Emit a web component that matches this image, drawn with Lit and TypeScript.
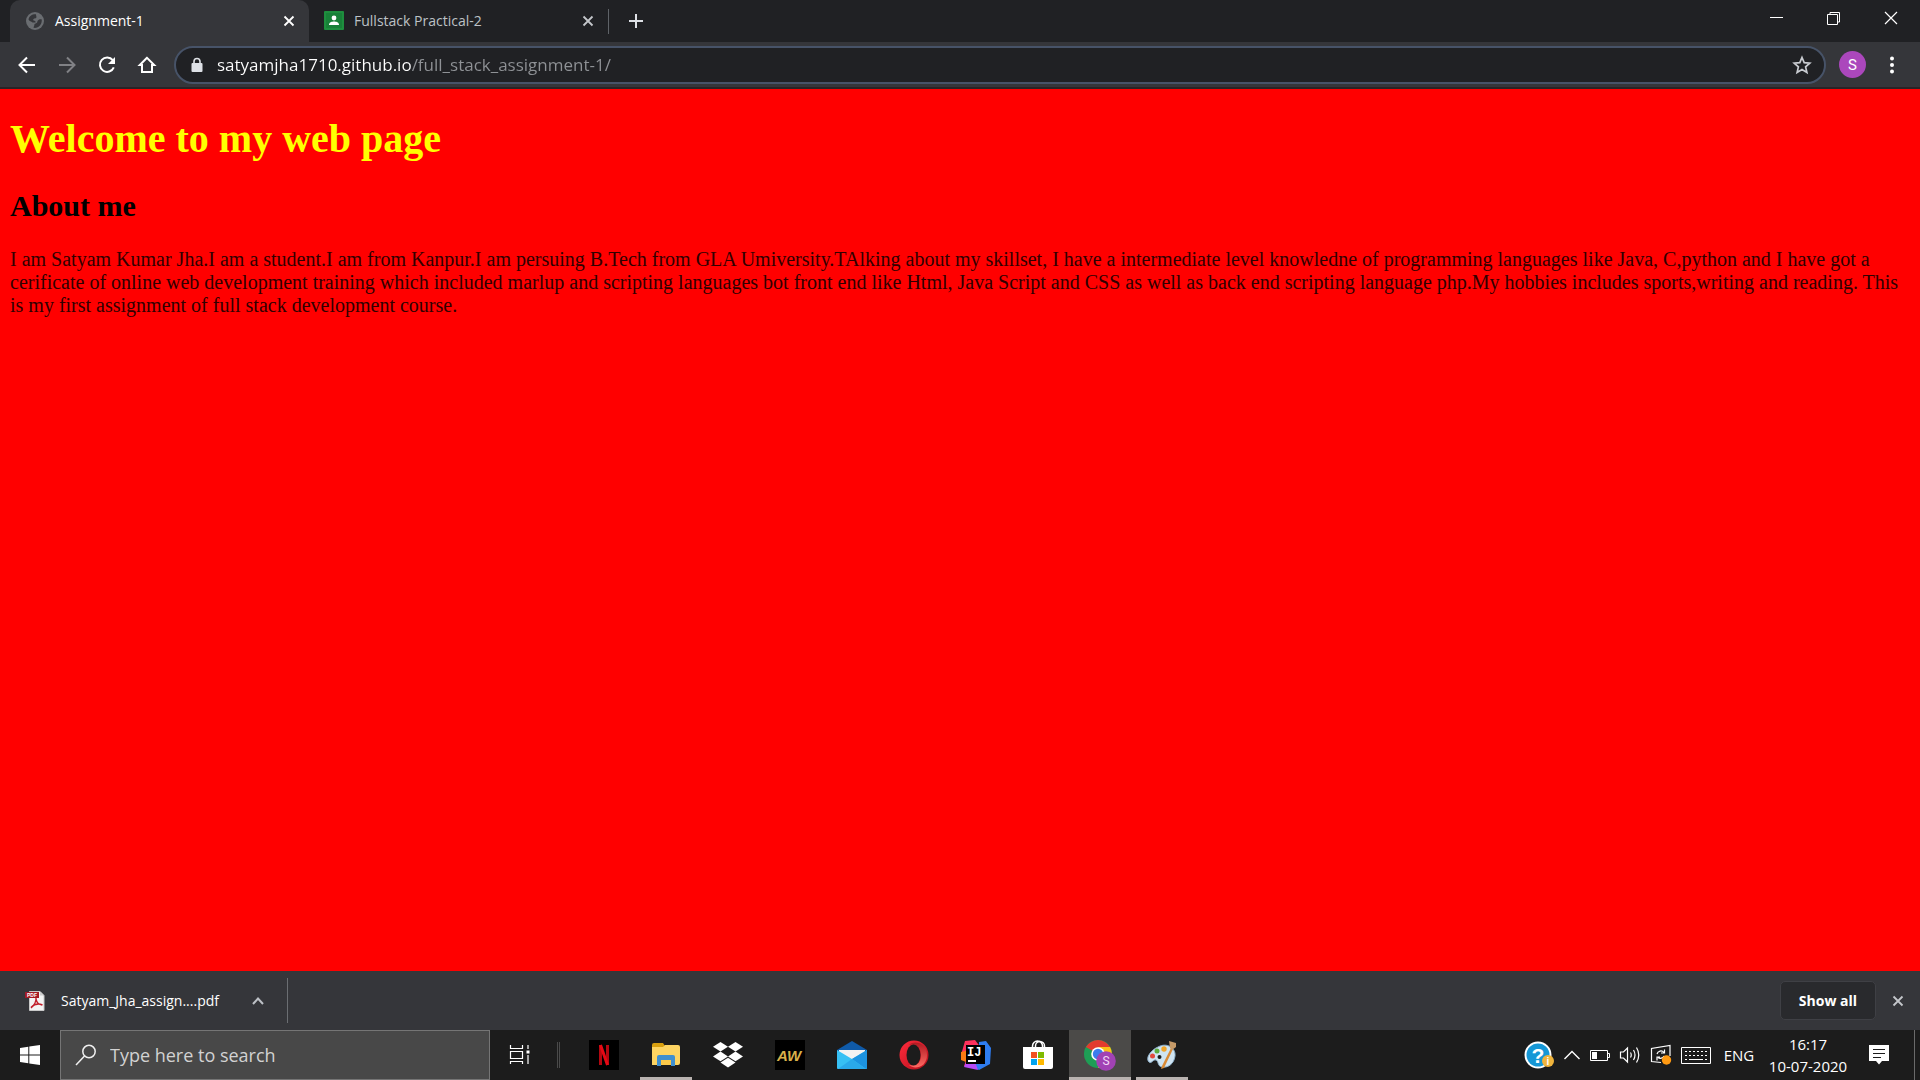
import { LitElement, html, svg, css, nothing, type TemplateResult } from "lit";
import { customElement, property } from "lit/decorators.js";
import { classMap } from "lit/directives/class-map.js";

const UI_FONT = css`"Open Sans", "Noto Sans", sans-serif`;

const resetStyles = css`
  :host,
  * {
    box-sizing: border-box;
  }
  button {
    display: flex;
    align-items: center;
    justify-content: center;
    flex: none;
    margin: 0;
    padding: 0;
    border: 0;
    background: none;
    color: inherit;
    font: inherit;
    white-space: nowrap;
  }
  svg {
    display: block;
    flex: none;
  }
`;

const icon = (size: number, body: TemplateResult) =>
  html`<svg width=${size} height=${size} viewBox="0 0 ${size} ${size}" fill="none" aria-hidden="true">${body}</svg>`;

/* ---------- browser icons ---------- */

const globeIcon = icon(18, svg`
  <circle cx="9" cy="9" r="9" fill="#6a6d71"/>
  <path d="M10 2.200C6 2 3 4 2.500 7.500 3 9.500 5.500 9 6.500 10.500H9.500C10 9.500 9 8.500 7.500 8.500 6.500 7 8 6 10 6.200 11 5 10 4 10 2.200Z M15.800 7.500C14 7 12.500 7.500 11.500 9 11.500 11 10 11.500 8.500 12 8.500 14 7.500 14.500 7.500 15.800 12.500 16.500 16 13 15.800 7.500Z" fill="#35363a"/>`);

const classroomIcon = icon(20, svg`
  <rect width="20" height="19" rx="1" fill="#1e8e3e"/>
  <rect x="2" y="2" width="16" height="15" fill="#188038"/>
  <circle cx="10" cy="7" r="2.400" fill="#fff"/>
  <path d="M5 14C5 11 8 10.500 10 10.500S15 11 15 14Z" fill="#fff"/>`);

const crossIcon = (color: string) => icon(12, svg`
  <path d="M1.500 1.500L10.500 10.500M10.500 1.500L1.500 10.500" stroke=${color} stroke-width="1.800"/>`);

const plusIcon = icon(16, svg`<path d="M8 1V15M1 8H15" stroke="#dee1e6" stroke-width="2"/>`);

const minimizeIcon = icon(14, svg`<path d="M0 6.500H13" stroke="#fff"/>`);
const restoreIcon = icon(14, svg`<path d="M.5 3.500H10.500V13.500H.5ZM3 3V1.500H12.500V11H11" stroke="#fff"/>`);
const closeIcon = icon(14, svg`<path d="M1 1L13 13M13 1L1 13" stroke="#fff" stroke-width="1.200"/>`);

const backIcon = icon(20, svg`<path d="M18 10H3M10 2.500L2.500 10 10 17.500" stroke="#fff" stroke-width="2"/>`);
const forwardIcon = icon(20, svg`<path d="M2 10H17M10 2.500L17.500 10 10 17.500" stroke="#808185" stroke-width="2"/>`);
const reloadIcon = icon(20, svg`
  <path d="M15.800 5.200A7.200 7.200 0 1 0 16.800 12.400" stroke="#fff" stroke-width="2"/>
  <path d="M18 2V9H11Z" fill="#fff"/>`);
const homeIcon = icon(20, svg`
  <path d="M10 2.800L2.800 10H5V17H15V10H17.200Z" stroke="#fff" stroke-width="2"/>`);
const lockIcon = icon(16, svg`
  <rect x="2.500" y="6" width="11" height="9" rx="1" fill="#dee1e6"/>
  <path d="M5 6.500V4.500A3 3 0 0 1 11 4.500V6.500" stroke="#dee1e6" stroke-width="1.600"/>`);
const starIcon = icon(20, svg`
  <path d="M10 2.500L12.200 7.700 17.800 8.200 13.600 11.900 14.900 17.400 10 14.500 5.100 17.400 6.400 11.900 2.200 8.200 7.800 7.700Z" stroke="#c9ccd1" stroke-width="1.700"/>`);
const dotsIcon = icon(18, svg`
  <g fill="#fff"><circle cx="9" cy="2.500" r="2"/><circle cx="9" cy="9" r="2"/><circle cx="9" cy="15.500" r="2"/></g>`);

const pdfIcon = icon(20, svg`
  <path d="M4.500 .5H15L19 4.500V19.500H4.500Z" fill="#f4f4f4" stroke="#c9c9c9"/>
  <path d="M15 .5V4.500H19" fill="#ccc"/>
  <path d="M6 17C9 14.500 11.500 10 11 6.500M6 16.500C9.500 13 14 12.500 17.500 14M11 8C11.500 11 14 13.500 17 14" stroke="#c11e2a" stroke-width="1.500"/>
  <rect y="1" width="14" height="6" fill="#a31b25"/>
  <text x="2" y="6" font-family="Liberation Sans, sans-serif" font-size="5" font-weight="700" fill="#fff">PDF</text>`);

const caretIcon = icon(12, svg`<path d="M1 9L6 3.500 11 9" stroke="#bdc1c6" stroke-width="2"/>`);

/* ---------- taskbar icons ---------- */

const windowsIcon = icon(20, svg`
  <path d="M0 3L8.300 1.800V9.500H0ZM9.300 1.600L20 0V9.500H9.300ZM0 10.500H8.300V18.200L0 17ZM9.300 10.500H20V20L9.300 18.400Z" fill="#fff"/>`);

const searchIcon = icon(22, svg`
  <circle cx="14" cy="7.500" r="6.200" stroke="#f0f0f0" stroke-width="1.500"/>
  <path d="M9.500 12L1 21" stroke="#f0f0f0" stroke-width="1.500"/>`);

const taskViewIcon = icon(22, svg`
  <path d="M1.500 1V4.500H13.500V1M1.500 7.500H13.500V14.500H1.500ZM1.500 20V17.500H13.500V20M19 1V5M19 11V20" stroke="#fff" stroke-width="1.200"/>
  <rect x="17.500" y="6.500" width="3" height="3" fill="#fff"/>`);

const netflixIcon = icon(30, svg`
  <rect width="30" height="30" fill="#000"/>
  <rect x="10" y="5" width="3" height="20" fill="#b20710"/>
  <rect x="17" y="5" width="3" height="20" fill="#b20710"/>
  <line x1="11.500" y1="5" x2="18.500" y2="25" stroke="#e50914" stroke-width="3"/>`);

const explorerIcon = icon(30, svg`
  <path d="M1 5Q1 3 3 3H12L14 6V10H1Z" fill="#d9a00f"/>
  <path d="M1 7H12L14 5H27Q29 5 29 7V23Q29 25 27 25H1Z" fill="#fdd462"/>
  <path d="M6 26V17Q6 15 8 15H22Q24 15 24 17V26H20V20H10V26Z" fill="#3f8fcf"/>
  <rect x="10" y="20" width="10" height="5" fill="#fbc94a"/>`);

const dropboxIcon = icon(30, svg`
  <g fill="#fff">
    <path d="M7.500 2L15 6.800 7.500 11.600 0 6.800Z"/><path d="M22.500 2L30 6.800 22.500 11.600 15 6.800Z"/>
    <path d="M7.500 11.600L15 16.400 7.500 21.200 0 16.400Z"/><path d="M22.500 11.600L30 16.400 22.500 21.200 15 16.400Z"/>
    <path d="M15 17.800L22.500 22.600 15 27.400 7.500 22.600Z"/>
  </g>`);

const awIcon = icon(30, svg`
  <rect width="30" height="30" fill="#000"/>
  <text x="14" y="21" text-anchor="middle" font-family="Liberation Sans, sans-serif" font-size="15" font-weight="700" font-style="italic" fill="#d9b04a">AW</text>`);

const mailIcon = icon(30, svg`
  <path d="M0 10L15 1 30 10V20H0Z" fill="#0f5aa8"/>
  <path d="M2 10H28V22H2Z" fill="#f2f2f2"/>
  <path d="M0 10L15 19 30 10V28Q30 29 29 29H1Q0 29 0 28Z" fill="#37c0f4"/>
  <path d="M15 19L30 10V28Q30 29 29 29Z" fill="#1c93e0"/>
  <path d="M1 29L15 19 29 29Z" fill="#2aa9ea"/>`);

const operaIcon = icon(30, svg`
  <defs>
    <linearGradient id="opera" x1="0" y1="0" x2="1" y2="1"><stop offset="0" stop-color="#ff2b3c"/><stop offset="1" stop-color="#b3101c"/></linearGradient>
    <linearGradient id="operaInner" x1="0" y1="0" x2="0" y2="1"><stop offset="0" stop-color="#b01a22"/><stop offset="1" stop-color="#ff6a62"/></linearGradient>
  </defs>
  <circle cx="15" cy="15" r="14.500" fill="url(#opera)"/>
  <path d="M10 5C14 1.500 20 2 24.500 5.500A14.500 14.500 0 0 1 24.500 24.500C20 28 14 28.500 10 25C20 27 22 20 22 15S20 3 10 5Z" fill="url(#operaInner)"/>
  <ellipse cx="14.500" cy="15" rx="7" ry="10.500" fill="#1c1c1c"/>`);

const intellijIcon = icon(30, svg`
  <path d="M4 1L14 0 20 8 12 28 3 26 6 18 0 15Z" fill="#fe315d"/>
  <path d="M0 12L8 10 10 24 0 20Z" fill="#f97a12"/>
  <path d="M18 2L25 1 30 8 29 24 18 30 10 26 18 14Z" fill="#2e7cf0"/>
  <path d="M6 20L14 22 17 30 3 27Z" fill="#b74af7"/>
  <rect x="5" y="5" width="19" height="19" fill="#000"/>
  <text x="6" y="16" font-family="Liberation Mono, monospace" font-size="12" font-weight="700" fill="#fff">IJ</text>
  <rect x="7" y="20" width="8" height="2" fill="#fff"/>`);

const storeIcon = icon(30, svg`
  <path d="M9.500 8V6A5 5 0 0 1 19.500 6V8M12.500 8V6A4 4 0 0 1 21.500 6V8" stroke="#fff" stroke-width="1.500"/>
  <path d="M0 7H30V27Q30 29 28 29H2Q0 29 0 27Z" fill="#fff"/>
  <rect x="8" y="12" width="6" height="6" fill="#f25022"/><rect x="15" y="12" width="6" height="6" fill="#7fba00"/>
  <rect x="8" y="19" width="6" height="6" fill="#00a4ef"/><rect x="15" y="19" width="6" height="6" fill="#ffb900"/>`);

const chromeIcon = icon(32, svg`
  <circle cx="14" cy="15" r="14" fill="#1e9e55"/>
  <path d="M14 15L1.900 8A14 14 0 0 1 26.100 8Z" fill="#e33b2e"/>
  <path d="M14 8H26.100A14 14 0 0 1 14 29L20 18Z" fill="#fbc116"/>
  <circle cx="14" cy="15" r="6.800" fill="#fff"/>
  <circle cx="14" cy="15" r="5.200" fill="#3b7ded"/>
  <circle cx="22" cy="22" r="9.800" fill="#a142b4"/>
  <text x="22" y="26" text-anchor="middle" font-family="Roboto, sans-serif" font-size="12" fill="#f3d9f7">S</text>`);

const paintIcon = icon(30, svg`
  <path d="M11 7C20 2 29 8 28 16 27 24 21 28 15 27 10 26 12 21 9 20 6 19 5 24 2 22-2 18 4 10 11 7Z" fill="#cfe4f2" stroke="#8fb2cc"/>
  <circle cx="12.500" cy="17" r="2" fill="#1c1c1c"/>
  <circle cx="5.500" cy="16" r="2.500" fill="#e2483d"/><circle cx="10" cy="11" r="2.500" fill="#5cab3c"/><circle cx="17" cy="9" r="2.700" fill="#f0a52a"/>
  <path d="M24 8L26 9 17 28 14 29 15 26Z" fill="#d98a35"/>
  <path d="M22 1L29 3 29 7 25 10 23 8Z" fill="#c59a68"/>`);

/* ---------- tray icons ---------- */

const helpIcon = icon(30, svg`
  <circle cx="14" cy="15" r="13.500" fill="#fff"/>
  <circle cx="14" cy="15" r="11.500" fill="#1597d6"/>
  <text x="14" y="22.500" text-anchor="middle" font-family="Liberation Sans, sans-serif" font-size="21" font-weight="700" fill="#fff">?</text>
  <circle cx="24" cy="21" r="6" fill="#f0b43c"/>
  <text x="24" y="25" text-anchor="middle" font-family="Liberation Sans, sans-serif" font-size="10" font-weight="700" fill="#fff">i</text>`);

const trayCaretIcon = icon(18, svg`<path d="M1.500 13L9 5.500 16.500 13" stroke="#fff" stroke-width="1.400"/>`);

const batteryIcon = icon(20, svg`
  <path d="M.5 5.500H17.500V15.500H.5ZM18 8.500H19.500V12.500H18" stroke="#fff"/>
  <rect x="2" y="7" width="5" height="7" fill="#fff"/>`);

const speakerIcon = icon(22, svg`
  <path d="M1.500 8H4.500L8.500 4V18L4.500 14H1.500Z" stroke="#fff" stroke-width="1.200"/>
  <path d="M11.500 8.500Q13 11 11.500 13.500M14.500 6Q17.500 11 14.500 16M17.500 3.500Q22 11 17.500 18.500" stroke="#fff" stroke-width="1.200"/>`);

const updateIcon = icon(22, svg`
  <path d="M11 18.500L1.500 17.500V4.500L20 1.500V12" stroke="#fff" stroke-width="1.200"/>
  <path d="M7 10A4 4 0 0 1 14 8.500M14.500 5.500V9H11M14 12A4 4 0 0 1 8 13.500M7 16.500V13H10" stroke="#fff" stroke-width="1.200"/>
  <circle cx="16.500" cy="16" r="4.700" fill="#ff9a12"/>`);

const keyboardIcon = icon(30, svg`
  <path d="M.5 7.500H29.500V23.500H.5Z" stroke="#fff"/>
  <path d="M4 11.500H26M4 15.500H26" stroke="#fff" stroke-width="1.200" stroke-dasharray="2 2"/>
  <path d="M4 19.500H6M8 19.500H22M24 19.500H26" stroke="#fff" stroke-width="1.200"/>`);

const notificationIcon = icon(20, svg`
  <path d="M0 0H20V16H13L10 19.500 7 16H0Z" fill="#fff"/>
  <path d="M4 4.500H16M4 8.500H16M4 12.500H12" stroke="#1c1c1c" stroke-width="1.200"/>`);

/* ---------- tab strip ---------- */

@customElement("browser-tabs")
class BrowserTabs extends LitElement {
  static styles = [
    resetStyles,
    css`
      :host {
        display: flex;
        height: 42px;
        padding: 0 1px 0 10px;
        background: #202124;
        color: #bdc1c6;
        font: 14px/20px ${UI_FONT};
      }
      .tabs {
        display: flex;
      }
      .tab {
        display: flex;
        align-items: center;
        width: 299px;
        padding: 0 10px 0 15px;
      }
      .tab.active {
        border-radius: 10px 10px 0 0;
        background: #35363a;
        color: #fff;
      }
      .title {
        flex: 1;
        justify-content: flex-start;
        gap: 10px;
      }
      .favicon {
        display: flex;
        justify-content: center;
        width: 20px;
      }
      .small {
        width: 20px;
        height: 20px;
      }
      .divider {
        width: 1px;
        height: 25px;
        margin-top: 9px;
        background: #5f6368;
      }
      .new {
        width: 54px;
      }
      .window {
        display: flex;
        height: 36px;
        margin-left: auto;
      }
      .window button {
        width: 57px;
      }
    `,
  ];

  private tab(title: string, favicon: TemplateResult, active: boolean) {
    return html`
      <div class=${classMap({ tab: true, active })}>
        <button class="title" role="tab" aria-selected=${active}>
          <span class="favicon">${favicon}</span>${title}
        </button>
        <button class="small" aria-label="Close tab">${crossIcon(active ? "#fff" : "#c4c7cb")}</button>
      </div>
    `;
  }

  render() {
    return html`
      <div class="tabs" role="tablist">
        ${this.tab("Assignment-1", globeIcon, true)} ${this.tab("Fullstack Practical-2", classroomIcon, false)}
      </div>
      <span class="divider"></span>
      <button class="new" aria-label="New tab">${plusIcon}</button>
      <div class="window">
        <button aria-label="Minimize">${minimizeIcon}</button>
        <button aria-label="Restore">${restoreIcon}</button>
        <button aria-label="Close">${closeIcon}</button>
      </div>
    `;
  }
}

/* ---------- toolbar with the address box ---------- */

@customElement("browser-toolbar")
class BrowserToolbar extends LitElement {
  static styles = [
    resetStyles,
    css`
      :host {
        display: flex;
        align-items: center;
        height: 47px;
        padding: 0 8px 0 7px;
        border-bottom: 2px solid #2b2326;
        background: #35363a;
        font: 17px/24px ${UI_FONT};
      }
      .nav {
        width: 40px;
        height: 40px;
      }
      .address {
        display: flex;
        align-items: center;
        flex: 1;
        gap: 12px;
        height: 38px;
        margin-left: 7px;
        padding: 0 12px 0 13px;
        border: 2px solid #475368;
        border-radius: 19px;
        background: #202124;
      }
      .url {
        flex: 1;
        min-width: 0;
        padding: 0;
        border: 0;
        outline: 0;
        background: linear-gradient(to right, #fff 195px, #8f9296 195px);
        background-clip: text;
        -webkit-background-clip: text;
        color: transparent;
        font: inherit;
      }
      .avatar {
        width: 27px;
        height: 27px;
        margin: 0 6px 0 13px;
        border-radius: 50%;
        background: #ab47bc;
        color: #fff;
        font: 15px/20px Roboto, sans-serif;
      }
      .menu {
        width: 40px;
        height: 40px;
      }
    `,
  ];

  render() {
    return html`
      <button class="nav" aria-label="Back">${backIcon}</button>
      <button class="nav" aria-label="Forward">${forwardIcon}</button>
      <button class="nav" aria-label="Reload">${reloadIcon}</button>
      <button class="nav" aria-label="Home">${homeIcon}</button>
      <div class="address">
        ${lockIcon}
        <input class="url" aria-label="Address" spellcheck="false" .value=${"satyamjha1710.github.io/full_stack_assignment-1/"} />
        <button aria-label="Bookmark this page">${starIcon}</button>
      </div>
      <button class="avatar" aria-label="Profile">S</button>
      <button class="menu" aria-label="Menu">${dotsIcon}</button>
    `;
  }
}

/* ---------- the visited page ---------- */

@customElement("web-page")
class WebPage extends LitElement {
  static styles = css`
    :host {
      display: flow-root;
      padding: 0 10px;
      background: #f00;
      color: #000;
      font: 20px/23px "Liberation Serif", serif;
    }
    h1 {
      margin: 27px 0;
      color: #ff0;
      font-size: 40px;
      line-height: 46px;
    }
    h2 {
      margin: 25px 0;
      font-size: 30px;
      line-height: 34px;
    }
    p {
      margin: 0;
      color: #300000;
    }
  `;

  render() {
    return html`
      <h1>Welcome to my web page</h1>
      <h2>About me</h2>
      <p>
        I am Satyam Kumar Jha.I am a student.I am from Kanpur.I am persuing B.Tech from GLA Umiversity.TAlking about my
        skillset, I have a intermediate level knowledne of programming languages like Java, C,python and I have got a
        cerificate of online web development training which included marlup and scripting languages bot front end like
        Html, Java Script and CSS as well as back end scripting language php.My hobbies includes sports,writing and
        reading. This is my first assignment of full stack development course.
      </p>
    `;
  }
}

/* ---------- downloads shelf ---------- */

@customElement("download-shelf")
class DownloadShelf extends LitElement {
  static styles = [
    resetStyles,
    css`
      :host {
        display: flex;
        align-items: center;
        height: 59px;
        padding: 0 12px 0 25px;
        background: #35363a;
        color: #fff;
        font: 14px/20px ${UI_FONT};
      }
      .file {
        gap: 16px;
      }
      .more {
        width: 58px;
        height: 40px;
        margin-left: 10px;
      }
      .divider {
        width: 1px;
        height: 45px;
        background: #6b6e72;
      }
      .all {
        height: 39px;
        margin: 0 12px 0 auto;
        padding: 0 18px;
        border: 1px solid #3f4045;
        border-radius: 5px;
        background: #292a2d;
        font-weight: 700;
      }
      .small {
        width: 20px;
        height: 20px;
      }
    `,
  ];

  render() {
    return html`
      <button class="file">${pdfIcon}<span>Satyam_Jha_assign....pdf</span></button>
      <button class="more" aria-label="Download options">${caretIcon}</button>
      <span class="divider"></span>
      <button class="all">Show all</button>
      <button class="small" aria-label="Close downloads">${crossIcon("#c4c7cb")}</button>
    `;
  }
}

/* ---------- desktop taskbar ---------- */

interface App {
  name: string;
  icon: TemplateResult;
  state?: "open" | "focused";
}

const APPS: App[] = [
  { name: "Netflix", icon: netflixIcon },
  { name: "File Explorer", icon: explorerIcon, state: "open" },
  { name: "Dropbox", icon: dropboxIcon },
  { name: "AW", icon: awIcon },
  { name: "Mail", icon: mailIcon },
  { name: "Opera", icon: operaIcon },
  { name: "IntelliJ IDEA", icon: intellijIcon },
  { name: "Microsoft Store", icon: storeIcon },
  { name: "Chrome", icon: chromeIcon, state: "focused" },
  { name: "Paint", icon: paintIcon, state: "open" },
];

@customElement("task-bar")
class TaskBar extends LitElement {
  @property({ attribute: false }) apps: App[] = APPS;

  static styles = [
    resetStyles,
    css`
      :host {
        display: flex;
        height: 50px;
        background: #1c1c1c;
        color: #fff;
        font: 15px/22px ${UI_FONT};
      }
      .start {
        width: 60px;
      }
      .search {
        display: flex;
        align-items: center;
        gap: 13px;
        width: 430px;
        padding: 0 14px;
        border: 1px solid #757575;
        background: #484848;
      }
      .query {
        flex: 1;
        min-width: 0;
        padding: 0;
        border: 0;
        outline: 0;
        background: none;
        color: #fff;
        font: 18px/24px ${UI_FONT};
      }
      .query::placeholder {
        color: #d2d2d2;
        opacity: 1;
      }
      .view {
        width: 60px;
      }
      .grip {
        align-self: center;
        width: 3px;
        height: 26px;
        margin: 0 13px 0 7px;
        border: solid #4a4a4a;
        border-width: 0 1px;
      }
      .apps {
        display: flex;
      }
      .app {
        width: 62px;
        display: grid;
        grid-template-rows: 47px 3px;
        place-items: center;
      }
      .app svg {
        margin-top: 3px;
      }
      .app.focused {
        background: #4b4a48;
      }
      .mark {
        width: 52px;
        height: 3px;
        background: #b9b3b0;
      }
      .focused .mark {
        width: 62px;
      }
      .tray {
        display: flex;
        align-items: center;
        gap: 9px;
        margin-left: auto;
      }
      .lang {
        width: 30px;
        margin-left: 4px;
      }
      .clock {
        flex-direction: column;
        width: 78px;
        margin: 0 13px 0 6px;
      }
      .desktop {
        width: 6px;
        height: 50px;
        margin-left: 16px;
        border-left: 1px solid #6a6a6a;
      }
    `,
  ];

  render() {
    return html`
      <button class="start" aria-label="Start">${windowsIcon}</button>
      <label class="search">
        ${searchIcon}
        <input class="query" type="text" placeholder="Type here to search" aria-label="Search" />
      </label>
      <button class="view" aria-label="Task view">${taskViewIcon}</button>
      <span class="grip"></span>
      <div class="apps">
        ${this.apps.map(
          (app) => html`
            <button class=${classMap({ app: true, focused: app.state === "focused" })} aria-label=${app.name}>
              ${app.icon} ${app.state ? html`<span class="mark"></span>` : nothing}
            </button>
          `,
        )}
      </div>
      <div class="tray">
        <button aria-label="Help">${helpIcon}</button>
        <button aria-label="Hidden icons">${trayCaretIcon}</button>
        <button aria-label="Battery">${batteryIcon}</button>
        <button aria-label="Volume">${speakerIcon}</button>
        <button aria-label="Updates">${updateIcon}</button>
        <button aria-label="Keyboard">${keyboardIcon}</button>
        <button class="lang">ENG</button>
        <button class="clock"><span>16:17</span><span>10-07-2020</span></button>
        <button aria-label="Notifications">${notificationIcon}</button>
        <button class="desktop" aria-label="Show desktop"></button>
      </div>
    `;
  }
}

@customElement("app-root")
class AppRoot extends LitElement {
  static styles = css`
    :host {
      display: flex;
      flex-direction: column;
      min-height: 100vh;
    }
    .page {
      flex: 1;
    }
  `;

  render() {
    return html`
      <browser-tabs></browser-tabs>
      <browser-toolbar></browser-toolbar>
      <web-page class="page"></web-page>
      <download-shelf></download-shelf>
      <task-bar></task-bar>
    `;
  }
}
